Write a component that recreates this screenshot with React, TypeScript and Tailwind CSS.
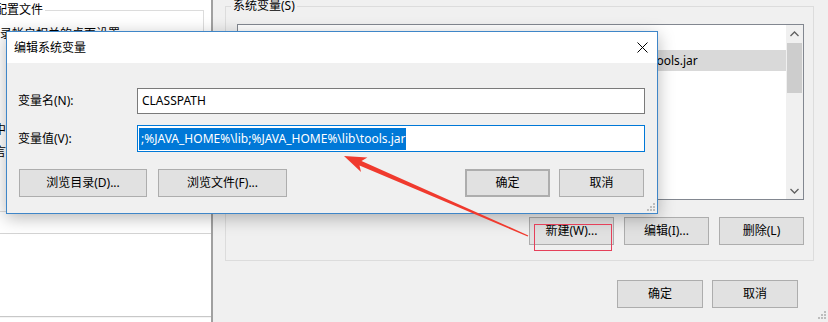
import React from 'react';

const listRows = [
  { name: 'CLASSPATH', value: '.;%JAVA_HOME%\\lib;%JAVA_HOME%\\lib\\tools.jar', selected: true },
  { name: 'ComSpec', value: 'C:\\WINDOWS\\system32\\cmd.exe' },
  { name: 'JAVA_HOME', value: 'C:\\Program Files\\Java\\jdk1.8.0_131' },
  { name: 'NUMBER_OF_PROCESSORS', value: '4' },
  { name: 'OS', value: 'Windows_NT' },
  { name: 'PROCESSOR_LEVEL', value: '6' },
];

function WinButton({ label, className = '' }: { label: string; className?: string }) {
  return (
    <div
      className={`flex h-[28px] items-center justify-center border border-[#adadad] bg-[#e1e1e1] text-[12px] text-black ${className}`}
    >
      {label}
    </div>
  );
}

function Chevron({ up }: { up?: boolean }) {
  return (
    <svg width="9" height="6" viewBox="0 0 9 6">
      <polyline
        points={up ? '0.5,5 4.5,1 8.5,5' : '0.5,1 4.5,5 8.5,1'}
        fill="none"
        stroke="#606060"
        strokeWidth="1.3"
      />
    </svg>
  );
}

function Grip() {
  return (
    <svg width="8" height="8" viewBox="0 0 8 8">
      <rect x="6" y="0" width="2" height="2" fill="#bdbdbd" />
      <rect x="3" y="3" width="2" height="2" fill="#bdbdbd" />
      <rect x="6" y="3" width="2" height="2" fill="#bdbdbd" />
      <rect x="0" y="6" width="2" height="2" fill="#bdbdbd" />
      <rect x="3" y="6" width="2" height="2" fill="#bdbdbd" />
      <rect x="6" y="6" width="2" height="2" fill="#bdbdbd" />
    </svg>
  );
}

export default function App() {
  return (
    <div className="relative flex h-[322px] w-[828px] overflow-hidden bg-[#f0f0f0] font-['Noto_Sans','Noto_Sans_CJK_SC',sans-serif] text-[12px] leading-[16px] text-black">
      {/* window behind, left */}
      <div className="flex w-[213px] shrink-0 flex-col overflow-hidden border-r-2 border-[#a0a0a0] bg-white">
        <fieldset className="ml-[-49px] mt-[2px] h-[210px] w-[253px] shrink-0 border border-[#dcdcdc] pl-[24px]">
          <legend className="ml-[-7px] px-[2px]">用户配置文件</legend>
          <div className="mt-[8px] whitespace-nowrap">与登录帐户相关的桌面设置</div>
          <div className="ml-[18px] mt-[80px]">中</div>
          <div className="ml-[18px] mt-[6px]">言</div>
        </fieldset>
        <div className="mt-[21px] h-px shrink-0 bg-[#d4d4d4]" />
        <div className="mt-[82px] h-px shrink-0 bg-[#c8c8c8]" />
        <div className="h-px shrink-0 bg-[#f4f4f4]" />
      </div>

      {/* window behind, right: 环境变量 */}
      <div className="relative flex flex-1 flex-col">
        <fieldset className="ml-[12px] mt-[-2px] h-[263px] w-[589px] border border-[#dcdcdc] pl-[11px] pr-[9px]">
          <legend className="ml-[-6px] px-[2px]">系统变量(S)</legend>
          <div className="mt-[10px] flex h-[176px] w-[567px] border border-[#828790] bg-white">
            <div className="flex flex-1 flex-col">
              <div className="flex h-[25px] items-center">
                <div className="w-[192px] pl-[8px]">变量</div>
                <div className="pl-[4px]">值</div>
              </div>
              {listRows.map((r) => (
                <div
                  key={r.name}
                  className={`flex h-[21px] items-center whitespace-nowrap ${r.selected ? 'bg-[#d9d9d9]' : ''}`}
                >
                  <div className="w-[192px] shrink-0 pl-[8px]">{r.name}</div>
                  <div>{r.value}</div>
                </div>
              ))}
            </div>
            <div className="flex w-[17px] flex-col bg-[#f0f0f0]">
              <div className="flex h-[17px] items-center justify-center">
                <Chevron up />
              </div>
              <div className="mx-px mt-px h-[50px] bg-[#cdcdcd]" />
              <div className="flex-1" />
              <div className="flex h-[17px] items-center justify-center">
                <Chevron />
              </div>
            </div>
          </div>
          <div className="mt-[17px] flex justify-end gap-[10px]">
            <WinButton label="新建(W)..." className="w-[85px]" />
            <WinButton label="编辑(I)..." className="w-[85px]" />
            <WinButton label="删除(L)" className="w-[85px]" />
          </div>
        </fieldset>
        <div className="mr-[30px] mt-[19px] flex justify-end gap-[9px]">
          <WinButton label="确定" className="w-[86px]" />
          <WinButton label="取消" className="w-[86px]" />
        </div>
        <div className="absolute bottom-[3px] right-[2px]">
          <Grip />
        </div>
      </div>

      {/* 编辑系统变量 dialog */}
      <div className="absolute left-[6px] top-[31px] flex h-[183px] w-[652px] flex-col border border-[#3f86c8] bg-[#f0f0f0] shadow-[0_4px_16px_rgba(0,0,0,0.28)]">
        <div className="flex h-[31px] shrink-0 items-center bg-white pl-[7px]">
          <span>编辑系统变量</span>
          <svg className="ml-auto mr-[9px]" width="11" height="11" viewBox="0 0 11 11">
            <path d="M0.5 0.5 L10.5 10.5 M10.5 0.5 L0.5 10.5" stroke="#000" strokeWidth="1" />
          </svg>
        </div>
        <div className="relative flex flex-1 flex-col pl-[11px] pr-[12px] pt-[25px]">
          <div className="flex items-center">
            <div className="w-[119px]">变量名(N):</div>
            <div className="flex h-[26px] flex-1 items-center border border-[#7a7a7a] bg-white pl-[4px]">CLASSPATH</div>
          </div>
          <div className="mt-[11px] flex items-center">
            <div className="w-[119px]">变量值(V):</div>
            <div className="flex h-[27px] flex-1 items-center border border-[#0078d7] bg-white pl-px">
              <span className="whitespace-nowrap bg-[#0078d7] pl-[2px] leading-[22px] text-white">
                ;%JAVA_HOME%\lib;%JAVA_HOME%\lib\tools.jar
              </span>
            </div>
          </div>
          <div className="mt-[17px] flex">
            <WinButton label="浏览目录(D)..." className="ml-px w-[128px]" />
            <WinButton label="浏览文件(F)..." className="ml-[11px] w-[129px]" />
            <WinButton label="确定" className="ml-auto w-[85px] border-2 border-[#0078d7]" />
            <WinButton label="取消" className="ml-[9px] mr-px w-[85px]" />
          </div>
          <div className="absolute bottom-[2px] right-[2px]">
            <Grip />
          </div>
        </div>
      </div>

      {/* red annotation arrow */}
      <svg className="pointer-events-none absolute left-0 top-0" width="828" height="322" viewBox="0 0 828 322">
        <polygon
          points="344,156 367.4,157.5 361.5,160.9 528.3,235.4 527.7,236.6 359.5,165.5 361,172.1"
          fill="#f03a2e"
        />
      </svg>
      <div className="absolute left-[534px] top-[224px] h-[27px] w-[78px] border border-[#e5405a]" />
    </div>
  );
}
